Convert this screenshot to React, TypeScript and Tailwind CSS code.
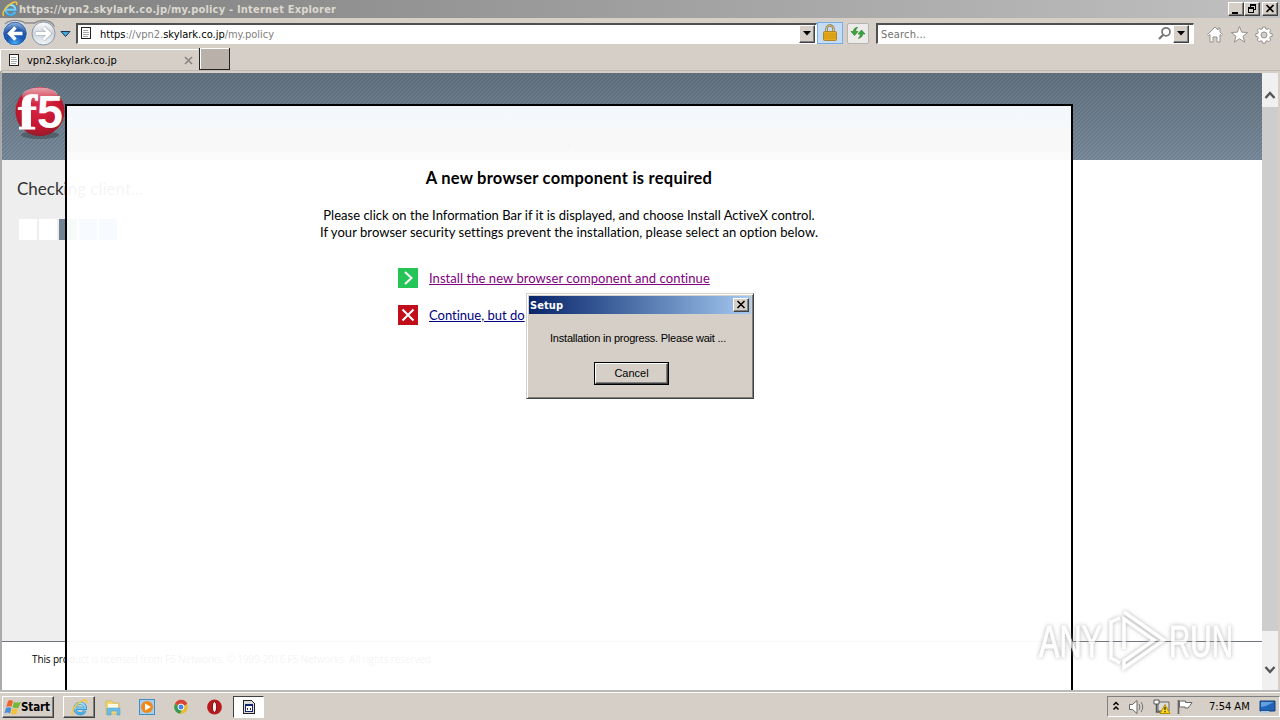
import React from "react";

const tahoma = "font-['DejaVu_Sans_Condensed','DejaVu_Sans',sans-serif] [font-stretch:condensed]";
const raised = "border border-t-white border-l-white border-r-[#404040] border-b-[#404040] shadow-[inset_-1px_-1px_0_#808080] bg-[#d6cfc7]";

function IeIcon({ size, id }: { size: number; id: string }) {
  return (
    <svg width={size} height={size} viewBox="0 0 20 20" className="block shrink-0">
      <defs>
        <linearGradient id={id} x1="0" y1="0" x2="0" y2="1">
          <stop offset="0" stopColor="#a5e6fb" />
          <stop offset="1" stopColor="#4aaee8" />
        </linearGradient>
      </defs>
      <path d="M16.500 13.600A6.200 6.200 0 1 1 17 11H6" fill="none" stroke="#2f8fcb" strokeWidth="3.600" />
      <path d="M16.500 13.600A6.200 6.200 0 1 1 17 11H6" fill="none" stroke={`url(#${id})`} strokeWidth="2.400" />
      <path d="M2.200 18.600C-1.500 15 6 5.500 13 2.200c4.500-2 6.500-.8 5 2.800" fill="none" stroke="#f3c63c" strokeWidth="1.800" />
    </svg>
  );
}

function DocIcon() {
  return (
    <svg width="11" height="13" viewBox="0 0 11 13" className="block shrink-0" shapeRendering="crispEdges">
      <rect x="0.500" y="0.500" width="9" height="11" fill="#fff" stroke="#222" />
      <path d="M2 3.500h5M2 5.500h6M2 7.500h6M2 9.500h5" stroke="#aaa" />
    </svg>
  );
}

function NavButtons() {
  return (
    <svg width="72" height="30" viewBox="0 0 72 30" className="block shrink-0">
      <defs>
        <radialGradient id="back" cx="0.5" cy="0.95" r="0.95">
          <stop offset="0" stopColor="#4db2f8" />
          <stop offset="0.4" stopColor="#1a58b4" />
          <stop offset="0.65" stopColor="#2559a8" />
          <stop offset="1" stopColor="#a5c2e8" />
        </radialGradient>
        <linearGradient id="fwd" x1="0" y1="0" x2="0" y2="1">
          <stop offset="0" stopColor="#fff" />
          <stop offset="0.5" stopColor="#ccd3da" />
          <stop offset="1" stopColor="#f2f7fa" />
        </linearGradient>
      </defs>
      <path d="M5 6Q9 2.500 15 2.500q7 0 10 2.500h10q3-2.500 8.500-2.500 8 0 11 6" fill="none" stroke="#8d8f92" strokeWidth="1.500" />
      <circle cx="15" cy="15.500" r="12" fill="url(#back)" stroke="#e8edf3" strokeWidth="1" />
      <circle cx="15" cy="15.500" r="11.300" fill="none" stroke="#2b5496" strokeWidth="0.800" />
      <path d="M22.500 15.500H10M15.500 9.500l-6 6 6 6" fill="none" stroke="#fff" strokeWidth="3.300" />
      <circle cx="43.500" cy="15.500" r="11.500" fill="url(#fwd)" stroke="#8796a6" />
      <path d="M36 15.500h12M43.500 9.500l6 6-6 6" fill="none" stroke="#a3adb8" strokeWidth="4.200" />
      <path d="M36 15.500h12M43.500 9.500l6 6-6 6" fill="none" stroke="#fff" strokeWidth="3" />
      <path d="M61 13.500h9l-4.500 5z" fill="#48a8d8" stroke="#173a58" strokeWidth="1" />
    </svg>
  );
}

function DropButton() {
  return (
    <div className={`flex h-[18px] w-4 shrink-0 items-center justify-center ${raised}`}>
      <svg width="8" height="5" viewBox="0 0 8 5"><path d="M0 0h8L4 4.500z" fill="#000" /></svg>
    </div>
  );
}

function TitleBar() {
  return (
    <div className="flex h-[18px] items-center bg-linear-to-r from-[#808080] to-[#c0c0c0] pl-[2px] pr-[2px]">
      <IeIcon size={16} id="ie1" />
      <span className={`ml-[1px] flex-1 whitespace-pre pt-[1px] text-[11px] font-bold leading-[17px] tracking-[0.2px] text-[#dcd8d0] ${tahoma}`}>https://vpn2.skylark.co.jp/my.policy - Internet Explorer</span>
      <div className={`h-[14px] w-4 ${raised}`}><svg width="14" height="12" viewBox="0 0 14 12"><path d="M3 9h6v2H3z" /></svg></div>
      <div className={`h-[14px] w-4 ${raised}`}><svg width="14" height="12" viewBox="0 0 14 12" shapeRendering="crispEdges"><path fillRule="evenodd" d="M5 1h6v6H9v3H3V4h2zM6 3v1h3v2h1V3zM4 6v3h4V6z" /></svg></div>
      <div className={`ml-[2px] h-[14px] w-4 ${raised}`}><svg width="14" height="12" viewBox="0 0 14 12"><path d="M3.500 2l7 7M10.500 2l-7 7" stroke="#000" strokeWidth="1.700" /></svg></div>
    </div>
  );
}

function AddressRow() {
  return (
    <div className="flex h-[30px] items-center">
      <NavButtons />
      <div className="ml-[4px] flex h-[21px] w-[741px] items-center border-l-2 border-t-2 border-b border-r border-l-[#505050] border-t-[#505050] border-b-white border-r-white bg-white pl-[3px] pr-[1px]">
        <DocIcon />
        <span className={`ml-[8px] flex-1 whitespace-pre pt-[1px] text-[11px] leading-[17px] tracking-[-0.01px] text-[#808080] ${tahoma}`}><span className="text-black">https</span>://vpn2.<span className="text-black">skylark.co.jp</span>/my.policy</span>
        <DropButton />
      </div>
      <div className="flex h-[22px] w-[26px] items-center justify-center border border-[#78aee8] bg-[#c5dcf5]">
        <svg width="16" height="18" viewBox="0 0 16 18"><path d="M4.500 8V5a3.500 3.500 0 0 1 7 0v3" fill="none" stroke="#87754a" strokeWidth="2.400" /><path d="M4.500 8V5a3.500 3.500 0 0 1 7 0v3" fill="none" stroke="#e1cc84" strokeWidth="1" /><rect x="1.500" y="7.500" width="13" height="9" rx="1" fill="#e9ae1c" stroke="#b08428" /><path d="M2 10h12M2 12h12M2 14h12" stroke="#c98908" strokeWidth="0.700" /></svg>
      </div>
      <div className="ml-[4px] flex h-[21px] w-[22px] items-center justify-center rounded-[2px] border border-[#b6b4b0] bg-[#ecebe9]">
        <svg width="16" height="16" viewBox="0 0 16 16" fill="#3aa53c" stroke="#2c8430" strokeWidth="0.700"><path d="M1 6.500l3.500 4L8 6.500H5.700c0-2 .6-3.200 2-4.200C5 2.500 3.600 4 3.400 6.500z" /><path d="M15 9l-3.500-4L8 9h2.300c0 2-.6 3.300-2 4.300 2.700-.3 4.100-1.800 4.300-4.300z" /></svg>
      </div>
      <div className="ml-[7px] flex h-[21px] w-[318px] items-center border-l-2 border-t-2 border-b border-r border-l-[#505050] border-t-[#505050] border-b-white border-r-white bg-white pr-[4px]">
        <span className={`ml-[3px] flex-1 pt-[1px] text-[11px] leading-[17px] tracking-[0.2px] text-[#707070] ${tahoma}`}>Search...</span>
        <svg width="15" height="15" viewBox="0 0 15 15" className="mr-[1px]" fill="none" stroke="#777"><circle cx="9" cy="5.800" r="4" strokeWidth="1.700" /><path d="M6 9L2 13" strokeWidth="2.300" /></svg>
        <DropButton />
      </div>
      <svg width="72" height="22" viewBox="0 0 72 22" className="ml-[12px] mt-[4px]" fill="#fff" stroke="#96928e" strokeWidth="1">
        <path d="M1.500 10.500L9 3l3 3V4h2v4l2.500 2.500-1.200 1.200L14 10.500V18h-3v-5H7v5H4v-7.500l-1.300 1.200z" />
        <path d="M33.500 2.500l2.200 5.700 6 .3-4.700 3.800 1.700 5.900-5.200-3.400-5.200 3.400 1.700-5.900-4.700-3.800 6-.3z" />
        <path fillRule="evenodd" d="M56.600 3h2.800l.4 2 1.300.5 1.800-1.100 1.900 1.900-1.100 1.800.5 1.300 2 .4v2.600l-2 .4-.5 1.300 1.100 1.800-1.900 1.900-1.800-1.100-1.300.5-.4 2h-2.800l-.4-2-1.300-.5-1.800 1.100-1.900-1.900 1.100-1.800-.5-1.300-2-.4V9.800l2-.4.5-1.300-1.100-1.800 1.900-1.900 1.800 1.100 1.300-.5zM58 8a3 3 0 1 0 0 6 3 3 0 0 0 0-6z" />
      </svg>
    </div>
  );
}

function Tabs() {
  return (
    <div className="flex h-[23px] border-b border-[#bdb8b1]">
      <div className="mt-[1px] flex h-[22px] w-[198px] items-center border-l border-t border-white pl-[8px] pr-[5px]">
        <DocIcon />
        <span className={`ml-[7px] flex-1 pt-[1px] text-[11px] tracking-[0.02px] text-black ${tahoma}`}>vpn2.skylark.co.jp</span>
        <svg width="9" height="9" viewBox="0 0 9 9"><path d="M1 1l7 7M8 1L1 8" stroke="#8a8682" strokeWidth="1.700" /></svg>
      </div>
      <div className="ml-[1px] h-[22px] w-[31px] border-b border-l border-r border-[#222] bg-[#b9b0aa] shadow-[inset_1px_1px_0_#fff]" />
    </div>
  );
}

function F5Logo() {
  return (
    <svg width="54" height="58" viewBox="0 0 54 58" className="block overflow-visible">
      <defs>
        <radialGradient id="ball" cx="0.48" cy="0.4" r="0.6">
          <stop offset="0" stopColor="#dc2843" />
          <stop offset="0.7" stopColor="#c4162f" />
          <stop offset="1" stopColor="#971b2c" />
        </radialGradient>
        <linearGradient id="gloss" x1="0" y1="0" x2="0" y2="1"><stop offset="0" stopColor="#fff" stopOpacity="0.6" /><stop offset="1" stopColor="#fff" stopOpacity="0" /></linearGradient>
      </defs>
      <ellipse cx="27" cy="50" rx="19" ry="4" fill="#414b55" opacity="0.6" />
      <circle cx="27" cy="26.500" r="24.500" fill="url(#ball)" />
      <ellipse cx="27" cy="11" rx="18" ry="8.500" fill="url(#gloss)" />
      <text x="5" y="44" fontFamily="Liberation Serif, serif" fontWeight="bold" fontSize="48" fill="#fff" stroke="#fff" strokeWidth="0.900" textLength="19" lengthAdjust="spacingAndGlyphs">f</text>
      <text x="24" y="43" fontFamily="Liberation Sans, sans-serif" fontWeight="bold" fontSize="46" fill="#fff" textLength="26" lengthAdjust="spacingAndGlyphs">5</text>
    </svg>
  );
}

function Dialog() {
  return (
    <div className="absolute left-[526px] top-[222px] flex h-[106px] w-[228px] flex-col border border-t-[#d4d0c8] border-l-[#d4d0c8] border-b-[#404040] border-r-[#404040] bg-[#d6cfc7] p-[2px] shadow-[inset_1px_1px_0_#fff,inset_-1px_-1px_0_#808080]">
      <div className="flex h-[18px] items-center bg-linear-to-r from-[#0a246a] to-[#a6caf0] pl-[1px] pr-[2px]">
        <span className={`flex-1 pt-[1px] text-[11px] font-bold leading-[17px] tracking-[0.1px] text-white ${tahoma}`}>Setup</span>
        <div className={`h-[14px] w-4 ${raised}`}><svg width="14" height="12" viewBox="0 0 14 12"><path d="M3.500 2l7 7M10.500 2l-7 7" stroke="#000" strokeWidth="1.600" /></svg></div>
      </div>
      <div className="mt-[17px] pl-[21px] font-['Liberation_Sans',sans-serif] text-[11px] leading-[14px] tracking-[-0.21px] whitespace-pre text-black">Installation in progress. Please wait ...</div>
      <div className="ml-[65px] mt-[17px] h-[23px] w-[75px] border border-black"><div className={`flex h-[21px] items-center justify-center font-['Liberation_Sans',sans-serif] text-[11px] text-black ${raised}`}>Cancel</div></div>
    </div>
  );
}

function Panel() {
  return (
    <div className="absolute left-[65px] top-[33px] h-[586px] w-[1008px] border-x-2 border-t-2 border-black bg-white/95 font-['Lato',sans-serif] text-black [font-variant-ligatures:none]">
      <div className="h-[54px] bg-[linear-gradient(#f4f8fc_0px,#f5f9fc_20px,#f8f8f8_22px,#f8f8f8_46px,#fbfbfb_47px)] pt-[32px] text-center text-[8px] leading-[10px] text-[#e4e4e4]">.</div>
      <h1 className="mt-[8px] text-center text-[16.5px] font-bold leading-[20px] tracking-[0.24px]">A new browser component is required</h1>
      <p className="mt-[19px] text-center text-[13px] leading-[17px] tracking-[0.01px]">Please click on the Information Bar if it is displayed, and choose Install ActiveX control.<br /><span className="tracking-[0.05px]">If your browser security settings prevent the installation, please select an option below.</span></p>
      <div className="ml-[331px] mt-[27px] flex h-[20px] items-center">
        <svg width="20" height="20" viewBox="0 0 20 20"><path fill="#25c456" d="M0 0h20v20H0z" /><path d="M7 4l6.500 6L7 16" fill="none" stroke="#fff" strokeWidth="2" /></svg>
        <a className="ml-[11px] text-[13px] leading-[20px] tracking-[0.06px] text-[#800080] underline">Install the new browser component and continue</a>
      </div>
      <div className="ml-[331px] mt-[17px] flex h-[20px] items-center">
        <svg width="20" height="20" viewBox="0 0 20 20"><path fill="#c20e1a" d="M0 0h20v20H0z" /><path d="M4.500 4.500l11 11M15.500 4.500l-11 11" stroke="#fff" strokeWidth="2" /></svg>
        <a className="ml-[11px] text-[13px] leading-[20px] text-[#000080] underline">Continue, but do</a>
      </div>
    </div>
  );
}

function Watermark() {
  return (
    <div className="absolute left-[1032px] top-[532px] flex h-[74px] w-[220px] items-center opacity-75">
      <svg width="220" height="74" viewBox="-4 -4 220 74" className="overflow-visible [filter:drop-shadow(0_0_2px_#999)]" fill="none">
        <g fill="#fff" stroke="#fff" strokeWidth="0.900" fontFamily="Liberation Sans Narrow, Liberation Sans, sans-serif" fontSize="44">
          <text x="3" y="50" textLength="63" lengthAdjust="spacingAndGlyphs">ANY</text>
          <text x="133" y="50" textLength="64" lengthAdjust="spacingAndGlyphs">RUN</text>
        </g>
        <path d="M88 5l40 28-40 28v-7l30-21-30-21v30M84 11l-9 4v36l9 5" stroke="#fff" strokeWidth="3.500" />
      </svg>
    </div>
  );
}

function Page() {
  return (
    <div className="relative flex h-[619px] border-l-2 border-l-[#aaa] pt-[2px]">
      <div className="flex w-[1260px] flex-col bg-white">
        <div className="h-[87px] bg-[repeating-linear-gradient(135deg,rgba(20,30,40,0.14)_0px,rgba(20,30,40,0.14)_1.4px,transparent_1.4px,transparent_2.83px),linear-gradient(#667583,#7c8e9f)] pl-[11px] pt-[12px]"><F5Logo /></div>
        <div className="flex h-[481px]">
          <div className="w-[63px] bg-[#eee] pl-[15px] pt-[18px] font-['Lato',sans-serif]">
            <div className="whitespace-nowrap text-[17px] leading-[22px] text-[#333]">Checking client...</div>
            <div className="ml-[2px] mt-[19px] flex w-[98px] gap-[2px]">
              <div className="h-[21px] w-[18px] bg-white" /><div className="h-[21px] w-[18px] bg-white" /><div className="h-[21px] w-[18px] bg-[#718392]" /><div className="h-[21px] w-[18px] bg-[#5f9fe0]" /><div className="h-[21px] w-[18px] bg-[#5f9fe0]" />
            </div>
          </div>
        </div>
        <div className="h-[49px] border-t border-[#70767c] pl-[30px] pt-[10px] font-['Open_Sans',sans-serif] text-[10px] leading-[14px] tracking-[-0.13px] text-black">This product is licensed from F5 Networks. © 1999-2016 F5 Networks. All rights reserved.</div>
      </div>
      <div className="flex w-[16px] flex-col bg-[#f0f0f0]">
        <svg width="16" height="34" viewBox="0 0 16 34"><path d="M3.500 25L8 20l4.500 5" fill="none" stroke="#555" strokeWidth="2.400" /></svg>
        <div className="h-[524px] bg-[#cdcdcd]" />
        <svg width="16" height="59" viewBox="0 0 16 59"><path d="M3.500 36L8 41l4.500-5" fill="none" stroke="#555" strokeWidth="2.400" /></svg>
      </div>
      <div className="absolute -left-[2px] top-0 h-full w-[1280px]"><Panel /><Dialog /><Watermark /></div>
    </div>
  );
}

function Taskbar() {
  return (
    <div className="flex h-[30px] items-start border-t-2 border-[#bdb9b3] pl-[2px] pt-[4px] shadow-[inset_0_1px_0_#fff]">
      <div className={`flex h-[22px] w-[52px] items-center pl-[1px] ${raised}`}>
        <svg width="17" height="17" viewBox="0 0 17 17" className="shrink-0"><path d="M4 2q2-2 5 0L7.500 7.800Q5 6.500 2.300 8z" fill="#ec672d" /><path d="M10 2.700q3 1.700 7 0L14.500 8.700q-3 1-6-.5z" fill="#75b83a" /><path d="M2 9q3-1.500 5.300 0L6 14.500q-2.800-1.800-5.500 0z" fill="#458fda" /><path d="M8.200 9.200q3 1.500 6 .5L12.500 15q-2.500 1-5.800-.5z" fill="#f4c33b" /></svg>
        <span className={`text-[11.5px] font-bold leading-[18px] tracking-[-0.1px] text-black ${tahoma}`}>Start</span>
      </div>
      <div className={`ml-[9px] flex h-[22px] w-[32px] items-center justify-center ${raised}`}><IeIcon size={17} id="ie2" /></div>
      <svg width="138" height="22" viewBox="0 0 138 22" className="shrink-0">
        <path d="M11 5h6l1 2h6v11H11z" fill="#f1d679" stroke="#d2b04e" strokeWidth="0.700" /><path d="M13 8h10v4H13z" fill="#fffbe3" /><path d="M12 19v-6q0-1 1-1h11q1 0 1 1v6h-3v-4h-6v4z" fill="#67bce8" stroke="#479ac9" strokeWidth="0.500" />
        <rect x="44.500" y="3.500" width="15" height="15" fill="#a5cff0" stroke="#438cc4" /><circle cx="52" cy="11" r="6" fill="#f28719" /><path d="M50 7.500l6 3.500-6 3.500z" fill="#fff" />
        <circle cx="86" cy="11" r="6.700" fill="#eabd2d" /><path d="M86 11l-6-3.200A6.700 6.700 0 0 1 92.300 8z" fill="#d94436" /><path d="M80 7.800a6.700 6.700 0 0 0 5 9.900l2.500-5z" fill="#399b53" /><circle cx="86" cy="11" r="3" fill="#4587e8" stroke="#fff" />
        <circle cx="119.500" cy="11" r="7.400" fill="#b9191d" /><ellipse cx="119.500" cy="11" rx="2.200" ry="5.400" fill="#f8eeee" stroke="#7c090c" />
      </svg>
      <div className="flex h-[22px] w-[31px] items-center justify-center border border-l-[#404040] border-t-[#404040] border-b-white border-r-white bg-white">
        <svg width="14" height="16" viewBox="0 0 14 16" shapeRendering="crispEdges"><path d="M1.500 1.500h8l3 3v10h-11z" fill="#ddd" stroke="#222" /><path d="M3.500 5.500h7v7h-7z" fill="#fff" stroke="#14246f" /><path d="M3 5h8v2H3z" fill="#14246f" /><path d="M5 9h1v2H5zM8 9h1v2H8z" fill="#333" /></svg>
      </div>
      <div className="ml-auto flex h-[21px] w-[173px] items-center border border-b-white border-l-[#808080] border-r-white border-t-[#808080] pl-[3px]">
        <svg width="84" height="20" viewBox="0 0 84 20" className="shrink-0">
          <path d="M2.500 8l2.500-2.500L7.500 8M2.500 12.500L5 10l2.500 2.500" fill="none" stroke="#000" strokeWidth="1.500" />
          <path d="M18.500 7.500h3l4.500-4v13l-4.500-4h-3z" fill="#fff" stroke="#666" /><path d="M28 7q2 3 0 6M30 5q3.500 5 0 10" fill="none" stroke="#777" />
          <path d="M47 5h11v9H47z" fill="#ddd" stroke="#666" /><path d="M43 3h5v4h-5z" fill="#fff" stroke="#555" /><path d="M45.500 7v8h4" fill="none" stroke="#555" strokeWidth="1.500" /><path d="M54 7.500l5 9H49z" fill="#ffd31c" stroke="#b18d00" /><path d="M54 10v3m0 1v1.300" stroke="#000" />
          <path d="M67.500 3v14" stroke="#666" strokeWidth="1.700" /><path d="M68.500 4h6v1.500H81l-2 3-2 2.500h-3V10h-5.500z" fill="#fff" stroke="#666" />
        </svg>
        <span className={`ml-[14px] w-[50px] whitespace-nowrap pt-[2px] text-[11px] text-black ${tahoma}`}>7:54 AM</span>
        <svg width="17" height="15" viewBox="0 0 17 15" className="shrink-0"><path d="M1 2h15v10H1z" fill="#2164b8" stroke="#173e73" /><path d="M2 3h13l-8 4-5 1z" fill="#62a0df" /><path d="M2 13h8" stroke="#adc9e5" strokeWidth="2" /></svg>
      </div>
    </div>
  );
}

export default function App() {
  return (
    <div className="flex h-[720px] w-[1280px] flex-col overflow-hidden bg-[#d6cfc7]">
      <TitleBar />
      <AddressRow />
      <Tabs />
      <Page />
      <Taskbar />
    </div>
  );
}
